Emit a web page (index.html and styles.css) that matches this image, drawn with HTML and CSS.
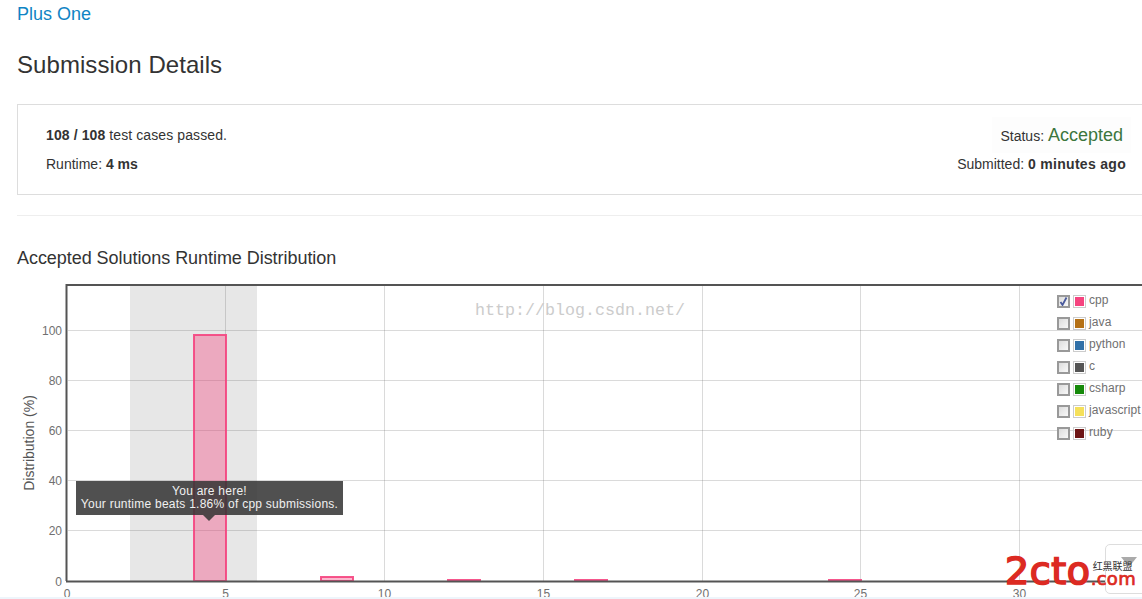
FILE: index.html
```html
<!DOCTYPE html>
<html lang="en">
<head>
<meta charset="utf-8">
<title>Submission Details</title>
<link rel="stylesheet" href="styles.css">
</head>
<body>
<main class="page">
  <a class="problem-link" href="#">Plus One</a>
  <h1 class="title">Submission Details</h1>
  <section class="result">
    <div class="result-left">
      <p class="line"><b>108 / 108</b> test cases passed.</p>
      <p class="line line-tight">Runtime: <b>4 ms</b></p>
    </div>
    <div class="result-right">
      <p class="status">Status: <span class="accepted">Accepted</span></p>
      <p class="line">Submitted: <b class="wide">0 minutes ago</b></p>
    </div>
  </section>
  <hr class="rule">
  <h2 class="subtitle">Accepted Solutions Runtime Distribution</h2>
  <div class="chart">
    <svg class="plot" width="1125" height="322" viewBox="17 275 1125 322" xmlns="http://www.w3.org/2000/svg">
      <rect x="130" y="286" width="127" height="295" fill="#e7e7e7"/>
      <g stroke="#555" stroke-opacity=".22" stroke-width="1">
        <path d="M68 330.5H1142M68 380.5H1142M68 430.5H1142M68 480.5H1142M68 530.5H1142"/>
        <path d="M225.5 286V581M384.5 286V581M543.5 286V581M702.5 286V581M860.5 286V581M1019.5 286V581"/>
      </g>
      <g fill="#f5447f" fill-opacity=".38" stroke="#f5447f" stroke-width="2" stroke-opacity=".9">
        <rect x="194" y="335" width="32" height="246"/>
        <rect x="321" y="577" width="32" height="4"/>
        <rect x="448" y="580" width="32" height="1"/>
        <rect x="575" y="580" width="32" height="1"/>
        <rect x="829" y="580" width="32" height="1"/>
      </g>
      <path d="M66.5 581V285H1142M66 581.5H1142" fill="none" stroke="#545454" stroke-width="2"/>
      <g class="tick tick-y">
        <text x="62" y="335">100</text><text x="62" y="385">80</text><text x="62" y="435">60</text>
        <text x="62" y="485">40</text><text x="62" y="535">20</text><text x="62" y="586">0</text>
      </g>
      <g class="tick tick-x">
        <text x="67" y="598">0</text><text x="225.5" y="598">5</text><text x="384.5" y="598">10</text>
        <text x="543.5" y="598">15</text><text x="702.5" y="598">20</text><text x="860.5" y="598">25</text><text x="1019.5" y="598">30</text>
      </g>
      <text class="axis-title" transform="translate(34 443) rotate(-90)">Distribution (%)</text>
      <text class="watermark" x="475" y="315">http://blog.csdn.net/</text>
    </svg>
    <div class="tooltip">You are here!<br>Your runtime beats 1.86% of cpp submissions.</div>
    <ul class="legend">
      <li class="legend-row"><span class="check"><svg width="9" height="9" viewBox="0 0 9 9"><path d="M1.5 5L3.5 8L7.5 .5" fill="none" stroke="#4a5a9c" stroke-width="1.8"/></svg></span><span class="swatch"><i class="c-cpp"></i></span><span class="legend-label">cpp</span></li>
      <li class="legend-row"><span class="check"></span><span class="swatch"><i class="c-java"></i></span><span class="legend-label">java</span></li>
      <li class="legend-row"><span class="check"></span><span class="swatch"><i class="c-python"></i></span><span class="legend-label">python</span></li>
      <li class="legend-row"><span class="check"></span><span class="swatch"><i class="c-c"></i></span><span class="legend-label">c</span></li>
      <li class="legend-row"><span class="check"></span><span class="swatch"><i class="c-csharp"></i></span><span class="legend-label">csharp</span></li>
      <li class="legend-row"><span class="check"></span><span class="swatch"><i class="c-js"></i></span><span class="legend-label">javascript</span></li>
      <li class="legend-row"><span class="check"></span><span class="swatch"><i class="c-ruby"></i></span><span class="legend-label">ruby</span></li>
    </ul>
    <div class="float-btn"><span class="float-arrow"></span></div>
    <div class="logo">
      <span class="logo-main">2cto</span><span class="logo-side"><span class="logo-cn">红黑联盟</span><span class="logo-com">.com</span></span>
    </div>
  </div>
</main>
<div class="strip"></div>
</body>
</html>
```
FILE: styles.css
```css
html, body { margin: 0; height: 599px; overflow: hidden; background: #fff; }
body { font-family: "Liberation Sans", Arial, sans-serif; color: #333; font-size: 14px; }
.page { padding-left: 17px; height: 597px; overflow: hidden; }
.problem-link { display: block; font-size: 18px; line-height: 18px; padding-top: 5px; color: #0f84c4; text-decoration: none; }
.title { margin: 21px 0 0; font-size: 24px; line-height: 42px; font-weight: 400; color: #333; letter-spacing: .06px; }
.result { width: 1130px; margin-top: 18px; box-sizing: border-box; height: 91px; border: 1px solid #ddd; display: flex; justify-content: space-between; padding: 12px 20px 0 28px; background: #fff; }
.line { margin: 0; line-height: 20px; height: 29px; color: #333; letter-spacing: .1px; }
.line-tight { letter-spacing: 0; }
.result-left .line { margin-top: 8px; height: 21px; margin-bottom: 8px; }
.result-right { display: flex; flex-direction: column; align-items: flex-end; }
.status { margin: 0; padding: 0 8px; height: 36px; line-height: 36px; background: #fdfdfd; margin-right: -5px; }
.accepted { color: #3c763d; font-size: 18px; }
.wide { letter-spacing: .3px; }
.result-right .line { margin-top: 1px; line-height: 20px; letter-spacing: 0; }
.rule { margin: 20px 0 0; border: 0; border-top: 1px solid #eee; width: 1125px; }
.subtitle { margin: 31px 0 0; font-size: 18px; line-height: 22px; font-weight: 400; color: #333; letter-spacing: -.05px; }
.chart { position: relative; margin-top: 6px; width: 1125px; height: 322px; }
.plot { display: block; }
.tick { font-size: 12px; fill: #707070; font-family: "Liberation Sans", Arial, sans-serif; }
.tick-y { text-anchor: end; }
.tick-x { text-anchor: middle; }
.axis-title { font-size: 14px; fill: #555; text-anchor: middle; font-family: "Liberation Sans", Arial, sans-serif; }
.watermark { font-family: "Liberation Mono", monospace; font-size: 16.67px; fill: #ccc; }
.tooltip { position: absolute; left: 59px; top: 206px; width: 267px; height: 34px; padding-top: 4px; box-sizing: border-box; background: rgba(51,51,51,.86); color: #f0f0f0; font-size: 12px; line-height: 13px; letter-spacing: .25px; text-align: center; }
.tooltip::after { content: ""; position: absolute; left: 127px; top: 34px; border: 6px solid transparent; border-top-color: rgba(51,51,51,.86); border-bottom: 0; }
.legend { position: absolute; left: 1040px; top: 15px; margin: 0; padding: 0; list-style: none; }
.legend-row { display: flex; align-items: center; height: 22px; font-size: 12px; color: #707070; white-space: nowrap; }
.legend-label { position: relative; top: -1px; letter-spacing: .1px; }
.check { width: 13px; height: 13px; box-sizing: border-box; border: 2px solid #999; background: linear-gradient(135deg, #dcdcdc, #f8f8f8); display: flex; align-items: center; justify-content: center; margin-right: 3px; }
.check svg { display: block; }
.swatch { width: 13px; height: 13px; box-sizing: border-box; border: 1px solid #ccc; padding: 1px; margin-right: 3px; }
.swatch i { display: block; width: 100%; height: 100%; }
.c-cpp { background: #f5447f; }
.c-java { background: #b57116; }
.c-python { background: #3070a8; }
.c-c { background: #555; }
.c-csharp { background: #168a0a; }
.c-js { background: #f5e05a; }
.c-ruby { background: #6d1414; }
.float-btn { position: absolute; left: 1088px; top: 269px; width: 60px; height: 50px; box-sizing: border-box; border: 1px solid #ddd; border-radius: 5px; background: #fff; }
.float-arrow { display: block; position: absolute; left: 15px; top: 12px; border: 8px solid transparent; border-top: 10px solid #aaa; border-bottom: 0; }
.logo { position: absolute; left: 988px; top: 278px; display: flex; align-items: flex-start; color: #dc2a22; }
.logo-main { font-family: "DejaVu Sans", sans-serif; font-weight: 400; font-size: 38px; line-height: 36px; letter-spacing: .6px; -webkit-text-stroke: 1.7px #dc2a22; }
.logo-side { display: flex; flex-direction: column; align-items: flex-start; }
.logo-cn { font-family: "Noto Sans CJK SC", sans-serif; font-size: 10px; line-height: 13px; color: #333; margin: 6px 0 0 2px; }
.logo-com { font-family: "DejaVu Sans", sans-serif; font-size: 18px; line-height: 14px; letter-spacing: .3px; -webkit-text-stroke: .7px #dc2a22; margin-top: 0; }
.strip { height: 2px; background: #eef5fb; }
```
